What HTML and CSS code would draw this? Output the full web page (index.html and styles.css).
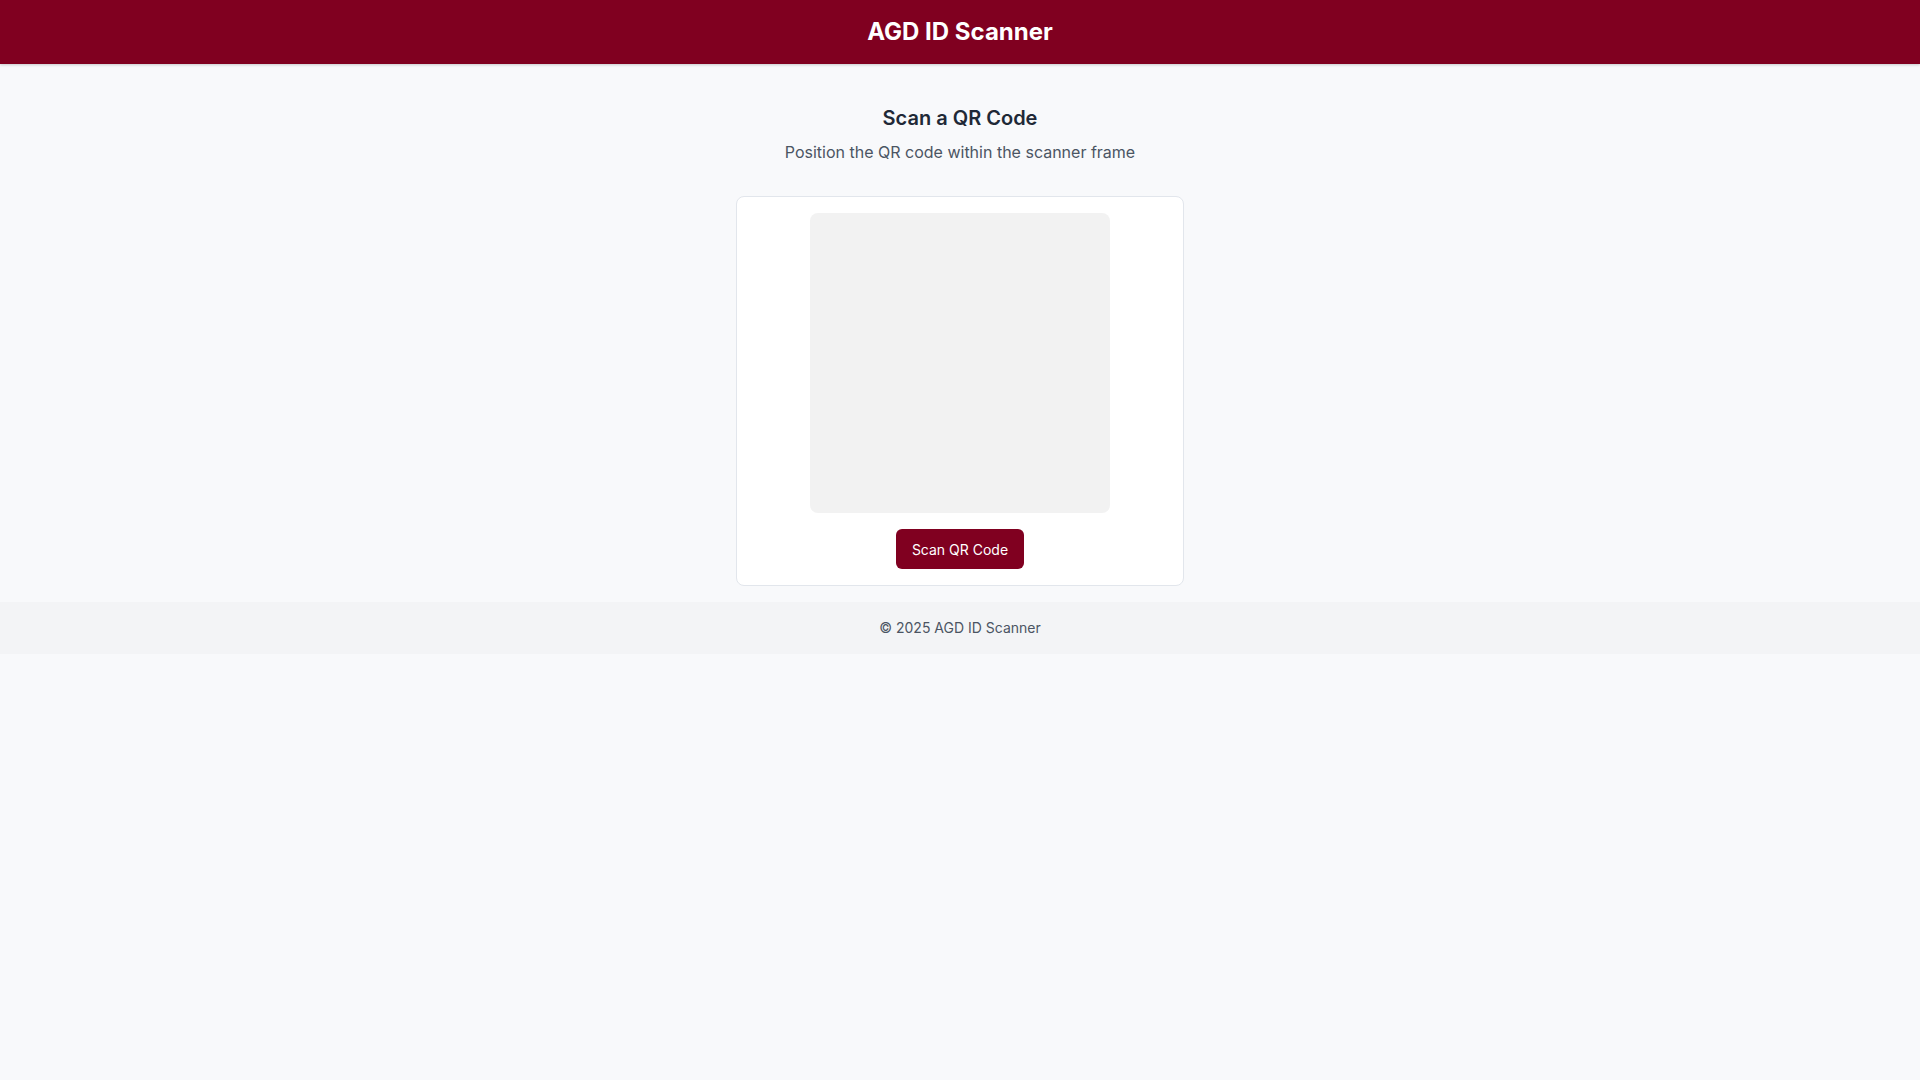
FILE: index.html
```html
<!DOCTYPE html>
<html lang="en">
<head>
<meta charset="utf-8">
<title>AGD ID Scanner</title>
<link rel="stylesheet" href="styles.css">
</head>
<body>
<header class="topbar">
  <h1 class="brand">AGD ID Scanner</h1>
</header>
<main class="main">
  <h2 class="title">Scan a QR Code</h2>
  <p class="subtitle">Position the QR code within the scanner frame</p>
  <section class="card">
    <div class="scanner"></div>
    <button class="scan-btn" type="button">Scan QR Code</button>
  </section>
</main>
<footer class="footer">© 2025 AGD ID Scanner</footer>
</body>
</html>
```
FILE: styles.css
```css
* { box-sizing: border-box; }
html, body { margin: 0; padding: 0; }
body {
  background: #f8f9fb;
  font-family: Inter, "Noto Sans", sans-serif;
  color: #1f2937;
  min-height: 100vh;
}
.topbar {
  height: 64px;
  background: #800020;
  display: flex;
  align-items: center;
  justify-content: center;
  box-shadow: 0 1px 3px rgba(0,0,0,0.12), 0 1px 2px rgba(0,0,0,0.08);
  position: relative;
}
.brand {
  margin: 0;
  color: #ffffff;
  font-size: 24px;
  line-height: 32px;
  font-weight: 700;
}
.main {
  padding: 40px 16px 16px;
  display: flex;
  flex-direction: column;
  align-items: center;
}
.title {
  margin: 0;
  font-size: 20px;
  line-height: 28px;
  font-weight: 600;
  color: #1f2937;
}
.subtitle {
  margin: 8px 0 0;
  font-size: 16px;
  line-height: 24px;
  color: #4b5563;
}
.card {
  margin-top: 32px;
  width: 448px;
  background: #ffffff;
  border: 1px solid #e2e6ec;
  border-radius: 8px;
  padding: 16px;
  display: flex;
  flex-direction: column;
  align-items: center;
  gap: 16px;
}
.scanner {
  width: 300px;
  height: 300px;
  background: #f2f2f2;
  border-radius: 8px;
}
.scan-btn {
  height: 40px;
  padding: 0 16px;
  border: none;
  border-radius: 6px;
  background: #800020;
  color: #ffffff;
  font-family: Inter, "Noto Sans", sans-serif;
  font-size: 14px;
  font-weight: 400;
  cursor: pointer;
}
.footer {
  background: #f3f4f6;
  padding: 16px;
  text-align: center;
  font-size: 14px;
  line-height: 20px;
  color: #4b5563;
}
```
